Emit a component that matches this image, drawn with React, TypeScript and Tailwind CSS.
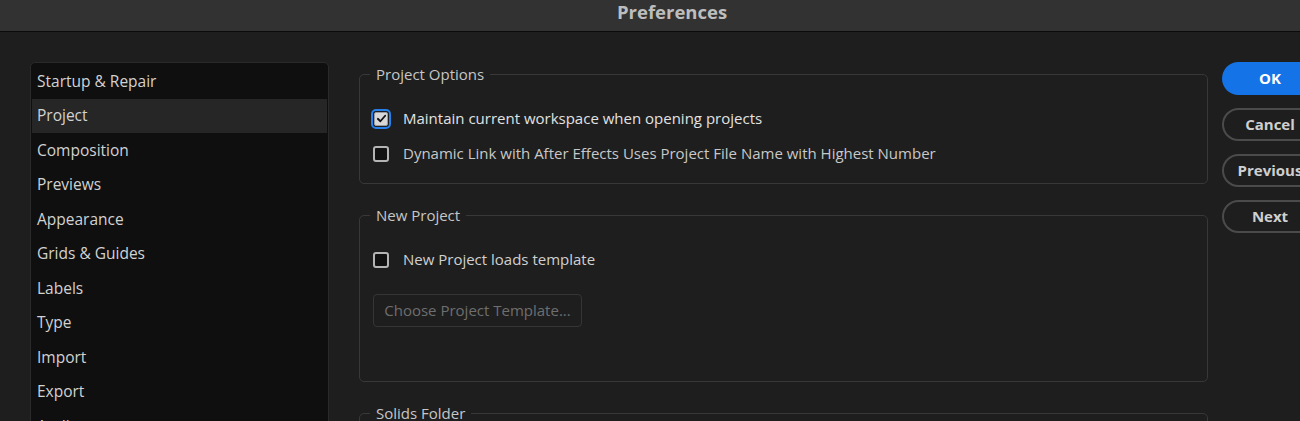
import React from "react";

const items = [
  "Startup & Repair",
  "Project",
  "Composition",
  "Previews",
  "Appearance",
  "Grids & Guides",
  "Labels",
  "Type",
  "Import",
  "Export",
  "Audio",
];

function Box({ checked }: { checked?: boolean }) {
  if (checked) {
    return (
      <div className="w-[20px] h-[20px] rounded-[5px] border-2 border-[#2680eb] p-[1px] shrink-0">
        <div className="w-[14px] h-[14px] rounded-[2px] bg-[#d8d8d8] border border-[#9a9a9a] flex items-center justify-center">
          <svg width="11" height="11" viewBox="0 0 12 12">
            <path d="M2 6.3 L4.8 9 L10 3" fill="none" stroke="#111" strokeWidth="2" strokeLinecap="round" strokeLinejoin="round" />
          </svg>
        </div>
      </div>
    );
  }
  return (
    <div className="w-[20px] h-[20px] flex items-center justify-center shrink-0">
      <div className="w-[16px] h-[16px] rounded-[3px] border-2 border-[#b4b4b4] bg-[#111]" />
    </div>
  );
}

function Group({ title, className, children }: { title: string; className?: string; children?: React.ReactNode }) {
  return (
    <div className={"relative border border-[#383838] rounded-[5px] " + (className ?? "")}>
      <div className="absolute left-[10px] top-[-11px] px-[6px] bg-[#1e1e1e] text-[15px] leading-[20px] text-[#c6c6c6]">
        {title}
      </div>
      {children}
    </div>
  );
}

export default function App() {
  return (
    <div
      className="w-[1300px] h-[421px] overflow-hidden bg-[#1e1e1e] flex flex-col"
      style={{ fontFamily: '"Open Sans", "Noto Sans", sans-serif' }}
    >
      <div className="h-[32px] shrink-0 bg-[#323232] border-b border-[#0b0b0b] flex items-start">
        <div className="ml-[617px] text-[18.5px] leading-[23px] font-bold text-[#bdbdbd]">Preferences</div>
      </div>
      <div className="flex flex-1 pt-[30px] pl-[30px] overflow-hidden">
        <div className="w-[299px] shrink-0 h-[400px] bg-[#0f0f0f] border border-[#2a2a2a] rounded-[5px] pt-[1px] px-[1px]">
          {items.map((it) => (
            <div
              key={it}
              className={
                "h-[34.5px] flex items-center pl-[5px] text-[15.5px] text-[#d2d2d2] " +
                (it === "Project" ? "bg-[#262626]" : "")
              }
            >
              {it}
            </div>
          ))}
        </div>
        <div className="ml-[30px] w-[849px] shrink-0 pt-[12px]">
          <Group title="Project Options" className="h-[110px] pt-[26px] pl-[11px]">
            <div className="h-[35px] flex items-center gap-[12px]">
              <Box checked />
              <span className="text-[15px] text-[#e2e2e2]">Maintain current workspace when opening projects</span>
            </div>
            <div className="h-[35px] flex items-center gap-[12px]">
              <Box />
              <span className="text-[15px] text-[#c8c8c8]">Dynamic Link with After Effects Uses Project File Name with Highest Number</span>
            </div>
          </Group>
          <Group title="New Project" className="mt-[31px] h-[167px] pt-[26px] pl-[11px]">
            <div className="h-[35px] flex items-center gap-[12px]">
              <Box />
              <span className="text-[15px] text-[#d0d0d0]">New Project loads template</span>
            </div>
            <div className="mt-[17px] ml-[2px] w-[209px] h-[33px] border border-[#353535] rounded-[4px] flex items-center justify-center text-[15px] text-[#6e6e6e]">
              Choose Project Template...
            </div>
          </Group>
          <Group title="Solids Folder" className="mt-[31px] h-[60px]" />
        </div>
        <div className="ml-[14px] w-[96px] shrink-0 flex flex-col">
          <div className="h-[33px] rounded-full bg-[#1473e6] flex items-center justify-center text-[15px] font-bold text-white">
            OK
          </div>
          <div className="mt-[13px] h-[33px] rounded-full border-2 border-[#4b4b4b] flex items-center justify-center text-[15px] font-bold text-[#cfcfcf]">
            Cancel
          </div>
          <div className="mt-[13px] h-[33px] rounded-full border-2 border-[#4b4b4b] flex items-center justify-center text-[15px] font-bold text-[#cfcfcf]">
            Previous
          </div>
          <div className="mt-[13px] h-[33px] rounded-full border-2 border-[#4b4b4b] flex items-center justify-center text-[15px] font-bold text-[#cfcfcf]">
            Next
          </div>
        </div>
      </div>
    </div>
  );
}
